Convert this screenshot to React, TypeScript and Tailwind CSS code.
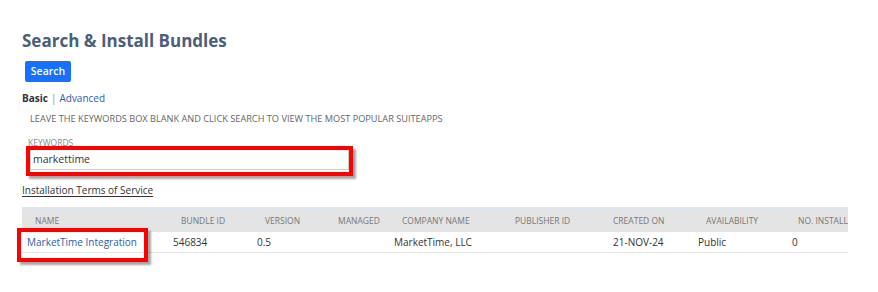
import React from "react";

const cols = [
  { h: "NAME", w: 146 },
  { h: "BUNDLE ID", w: 84 },
  { h: "VERSION", w: 73 },
  { h: "MANAGED", w: 64 },
  { h: "COMPANY NAME", w: 113 },
  { h: "PUBLISHER ID", w: 98 },
  { h: "CREATED ON", w: 93 },
  { h: "AVAILABILITY", w: 94 },
  { h: "NO. INSTALL", w: 61 },
];

export default function App() {
  const row = ["MarketTime Integration", "546834", "0.5", "", "MarketTime, LLC", "", "21-NOV-24", "Public", "0"];
  return (
    <div
      className="relative w-[878px] h-[292px] bg-white overflow-hidden pl-[22px] pt-[30px]"
      style={{ fontFamily: '"Open Sans", "Noto Sans", sans-serif' }}
    >
      <h1 className="text-[17px] leading-[22px] font-bold text-[#4d5e78]">Search &amp; Install Bundles</h1>
      <button className="mt-[9px] ml-[3px] h-[21px] w-[46px] rounded-[2px] bg-[#1870ff] text-white text-[10.5px] font-semibold leading-[21px]">
        Search
      </button>
      <div className="mt-[9px] text-[10px] leading-[14px]">
        <span className="font-bold text-[#333]">Basic</span>
        <span className="text-[#888] mx-[3px]">|</span>
        <span className="text-[#2e5ca8]">Advanced</span>
      </div>
      <div className="mt-[8px] ml-[8px] text-[9.2px] leading-[12px] text-[#666] uppercase">
        Leave the keywords box blank and click search to view the most popular suiteapps
      </div>
      <div className="mt-[13px] ml-[6px] text-[8.5px] leading-[10px] text-[#888]">KEYWORDS</div>
      <div className="mt-0 ml-[8px] w-[319px] h-[22px] border border-[#ccc] px-[2px] text-[10.5px] leading-[20px] text-[#333]">
        markettime
      </div>
      <div className="mt-[13px] text-[10px] leading-[14px] text-[#333] underline underline-offset-[2px]">
        Installation Terms of Service
      </div>
      <div className="mt-[10px] w-[826px] overflow-hidden">
        <div className="h-[3px] bg-[#dde5ef]" />
        <div className="flex h-[22px] bg-[#e4e4e4] items-center">
          {cols.map((c, i) => (
            <div
              key={c.h}
              className={`shrink-0 whitespace-nowrap overflow-hidden text-[8.5px] text-[#777] ${i === 8 ? "pl-[11px]" : "pl-[13px]"}`}
              style={{ width: c.w }}
            >
              {c.h}
            </div>
          ))}
        </div>
        <div className="flex h-[21px] items-center border-b border-[#e6e6e6]">
          {row.map((v, i) => (
            <div
              key={i}
              className={`shrink-0 whitespace-nowrap text-[10px] ${i === 0 ? "text-[#2e5ca8]" : "text-[#333]"} ${i === 6 ? "pl-[13px]" : "pl-[5px]"}`}
              style={{ width: cols[i].w }}
            >
              {v}
            </div>
          ))}
        </div>
      </div>
      {/* annotation boxes */}
      <div className="absolute left-[26px] top-[146px] w-[327px] h-[30px] border-[4px] border-[#ff0000] shadow-[3px_3px_2px_rgba(0,0,0,0.35)]" />
      <div className="absolute left-[17px] top-[228px] w-[131px] h-[34px] border-[4px] border-[#ff0000] shadow-[3px_3px_2px_rgba(0,0,0,0.35)]" />
    </div>
  );
}
